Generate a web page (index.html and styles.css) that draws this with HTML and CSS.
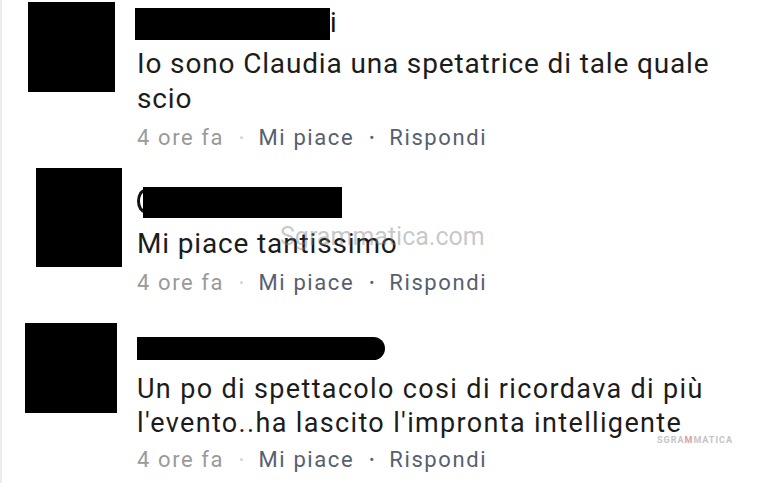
FILE: index.html
```html
<!DOCTYPE html>
<html lang="it">
<head>
<meta charset="utf-8">
<title>Commenti</title>
<link rel="stylesheet" href="styles.css">
</head>
<body>
<div class="page">
  <div class="comment c1">
    <div class="avatar"></div>
    <div class="content">
      <div class="name"><span class="bar"></span><span class="tail">i</span></div>
      <div class="text">Io sono Claudia una spetatrice di tale quale<br>scio</div>
      <div class="meta"><span class="time">4 ore fa</span><span class="dot light">•</span><span class="link">Mi piace</span><span class="dot">•</span><span class="link">Rispondi</span></div>
    </div>
  </div>
  <div class="comment c2">
    <div class="avatar"></div>
    <div class="content">
      <div class="name"><span class="arc"></span><span class="bar"></span></div>
      <div class="text">Mi piace tantissimo</div>
      <div class="meta"><span class="time">4 ore fa</span><span class="dot light">•</span><span class="link">Mi piace</span><span class="dot">•</span><span class="link">Rispondi</span></div>
      <span class="watermark">Sgrammatica.com</span>
    </div>
  </div>
  <div class="comment c3">
    <div class="avatar"></div>
    <div class="content">
      <div class="name"><span class="bar"></span></div>
      <div class="text">Un po di spettacolo cosi di ricordava di più<br>l'evento..ha lascito l'impronta intelligente</div>
      <div class="meta"><span class="time">4 ore fa</span><span class="dot light">•</span><span class="link">Mi piace</span><span class="dot">•</span><span class="link">Rispondi</span></div>
      <span class="logo">SGRA<span class="x">M</span>MATICA</span>
    </div>
  </div>
</div>
</body>
</html>
```

FILE: styles.css
```css
html, body {
  margin: 0;
  padding: 0;
  background: #ffffff;
}
body {
  width: 768px;
  height: 483px;
  overflow: hidden;
  font-family: Roboto, "Noto Sans", sans-serif;
  color: #1c1c1c;
}
.page {
  display: flex;
  flex-direction: column;
  height: 483px;
  border-left: 2px solid #ececec;
  box-sizing: border-box;
}
.comment {
  display: flex;
  align-items: flex-start;
}
.avatar {
  background: #000;
  flex: none;
}
.content {
  position: relative;
  display: flex;
  flex-direction: column;
}
.name {
  display: flex;
  align-items: flex-start;
}
.bar {
  display: block;
  background: #000;
}
.text {
  font-size: 28px;
  line-height: 35px;
  letter-spacing: 0.85px;
  white-space: nowrap;
}
.meta {
  display: flex;
  font-size: 22px;
  line-height: 28px;
  letter-spacing: 1.6px;
  white-space: nowrap;
}
.time { color: #9a9a9a; }
.link { color: #56606f; }
.dot {
  color: #56606f;
  font-size: 15px;
  letter-spacing: 0;
  margin: 0 15px;
}
.dot.light { color: #d2d2d2; font-size: 13px; }

/* comment 1 */
.c1 { padding-top: 2px; }
.c1 .avatar { margin-left: 26px; width: 87px; height: 90px; }
.c1 .content { margin-left: 22px; }
.c1 .name { height: 44px; }
.c1 .bar { margin-top: 6px; margin-left: -2px; width: 195px; height: 32px; }
.c1 .tail { font-size: 27px; line-height: 30px; margin-top: 6px; color: #111; }
.c1 .meta { margin-top: 8px; }

/* comment 2 */
.c2 { margin-top: 16px; }
.c2 .avatar { margin-left: 34px; width: 86px; height: 99px; }
.c2 .content { margin-left: 15px; }
.c2 .name { height: 58px; }
.c2 .arc {
  display: block;
  flex: none;
  margin-top: 21px;
  width: 16px;
  height: 24px;
  box-sizing: border-box;
  border: 3px solid #111;
  border-right-color: transparent;
  border-radius: 50%;
}
.c2 .bar { margin-top: 19px; margin-left: -10px; width: 199px; height: 31px; }
.c2 .meta { margin-top: 8px; }
.c2 .watermark {
  position: absolute;
  left: 143px;
  top: 54px;
  font-size: 25px;
  color: rgba(130, 130, 130, 0.45);
  white-space: nowrap;
}

/* comment 3 */
.c3 { margin-top: 26px; }
.c3 .avatar { margin-left: 23px; width: 92px; height: 90px; }
.c3 .content { margin-left: 20px; }
.c3 .name { height: 49px; }
.c3 .bar { margin-top: 14px; width: 248px; height: 23px; border-radius: 0 12px 12px 0; }
.c3 .text { font-size: 27px; line-height: 34px; letter-spacing: 1.35px; }
.c3 .meta { margin-top: 6px; }
.c3 .logo {
  position: absolute;
  left: 520px;
  top: 112px;
  font-size: 9px;
  letter-spacing: 1px;
  font-weight: bold;
  color: #c4c4c4;
  white-space: nowrap;
}
.c3 .logo .x { color: #d9a0a0; }
```
